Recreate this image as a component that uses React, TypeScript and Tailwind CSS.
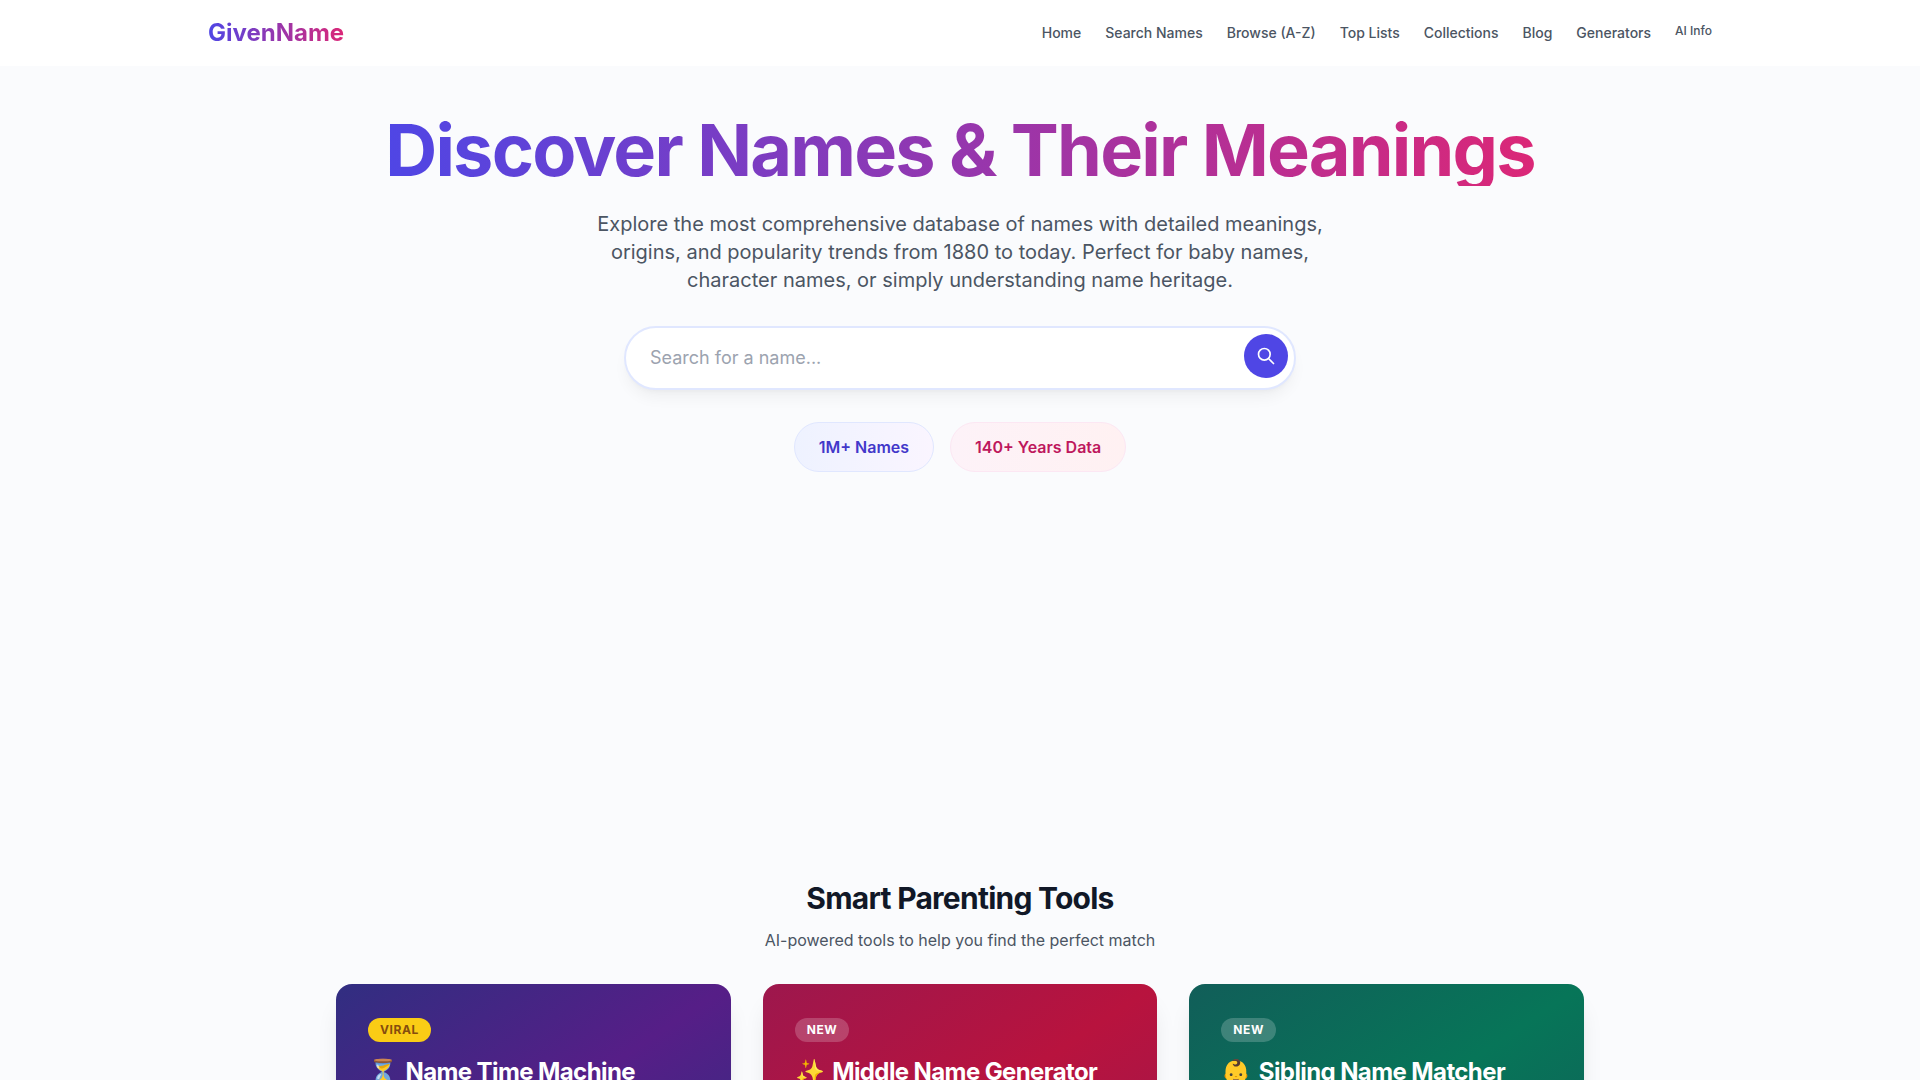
const navLinks = ['Home', 'Search Names', 'Browse (A-Z)', 'Top Lists', 'Collections', 'Blog', 'Generators']

const tools = [
  {
    badge: 'VIRAL',
    badgeClass: 'bg-[#facc15] text-[#854d0e]',
    emoji: '⏳',
    title: 'Name Time Machine',
    cardClass: 'from-[#312e81] via-[#561e87] to-[#312e81]',
  },
  {
    badge: 'NEW',
    badgeClass: 'bg-white/20 text-white',
    emoji: '✨',
    title: 'Middle Name Generator',
    cardClass: 'from-[#9d174d] via-[#b8133e] to-[#9d174d]',
  },
  {
    badge: 'NEW',
    badgeClass: 'bg-white/20 text-white',
    emoji: '👶',
    title: 'Sibling Name Matcher',
    cardClass: 'from-[#115e59] via-[#077558] to-[#115e59]',
  },
]

export default function App() {
  return (
    <div className="h-[1080px] overflow-hidden bg-[#fafbfd] font-['Inter',sans-serif] text-[#111827]">
      <header className="h-[66px] bg-white">
        <div className="mx-auto flex h-full max-w-[1536px] items-center justify-between px-4">
          <a className="bg-linear-to-r/srgb from-[#4f46e5] to-[#db2777] bg-clip-text text-2xl font-bold text-transparent">
            GivenName
          </a>
          <nav className="flex items-start gap-6">
            {navLinks.map((link) => (
              <a key={link} className="text-sm font-medium text-[#4b5563]">
                {link}
              </a>
            ))}
            <a className="text-xs font-medium text-[#4b5563]">AI Info</a>
          </nav>
        </div>
      </header>

      <main>
        <section className="flex flex-col items-center pt-[48px]">
          <h1 className="bg-linear-to-r/srgb from-[#4f46e5] to-[#db2777] bg-clip-text text-[72px] leading-[72px] font-bold tracking-[-1.8px] text-transparent">
            Discover Names &amp; Their Meanings
          </h1>
          <p className="mt-6 w-[768px] text-center text-xl leading-7 text-[#4b5563]">
            Explore the most comprehensive database of names with detailed meanings, origins, and popularity trends from 1880 to today. Perfect for baby names, character names, or simply understanding name heritage.
          </p>

          <div className="mt-8 flex h-16 w-[672px] items-center justify-between rounded-full border-2 border-[#e0e7ff] bg-white pr-[6px] pl-6 shadow-lg shadow-black/5">
            <input
              placeholder="Search for a name..."
              className="flex-1 bg-transparent text-lg text-[#111827] outline-none placeholder:text-[#9ca3af]"
            />
            <button className="mb-1 flex h-11 w-11 items-center justify-center rounded-full bg-[#4f46e5] text-white">
              <svg width="20" height="20" viewBox="0 0 24 24" fill="none" stroke="currentColor" strokeWidth="2" strokeLinecap="round" strokeLinejoin="round">
                <path d="M21 21l-6-6m2-5a7 7 0 11-14 0 7 7 0 0114 0z" />
              </svg>
            </button>
          </div>

          <div className="mt-8 flex gap-4">
            <div className="flex h-[50px] items-center rounded-full border border-[#e0e7ff] bg-linear-to-r/srgb from-[#eef2ff] to-[#faf5ff] px-6 font-semibold text-[#4338ca]">
              1M+ Names
            </div>
            <div className="flex h-[50px] items-center rounded-full border border-[#fce7f3] bg-linear-to-r/srgb from-[#fdf2f8] to-[#fff1f2] px-6 font-semibold text-[#be185d]">
              140+ Years Data
            </div>
          </div>
        </section>

        <div className="h-[408px]" />

        <section className="mx-auto max-w-[1280px] px-4">
          <h2 className="text-center text-3xl font-bold tracking-tight">Smart Parenting Tools</h2>
          <p className="mt-3 text-center text-base text-[#4b5563]">AI-powered tools to help you find the perfect match</p>
          <div className="mt-8 grid grid-cols-3 gap-8">
            {tools.map((tool) => (
              <div key={tool.title} className={`h-[265px] rounded-2xl bg-linear-to-br/srgb p-8 text-white shadow-xl ${tool.cardClass}`}>
                <span className={`inline-block rounded-full px-3 py-1 text-xs font-bold tracking-wider ${tool.badgeClass}`}>
                  {tool.badge}
                </span>
                <h3 className="mt-3.5 text-2xl font-bold tracking-tight">
                  <span className="mr-[3px]">{tool.emoji}</span> {tool.title}
                </h3>
              </div>
            ))}
          </div>
        </section>
      </main>
    </div>
  )
}
